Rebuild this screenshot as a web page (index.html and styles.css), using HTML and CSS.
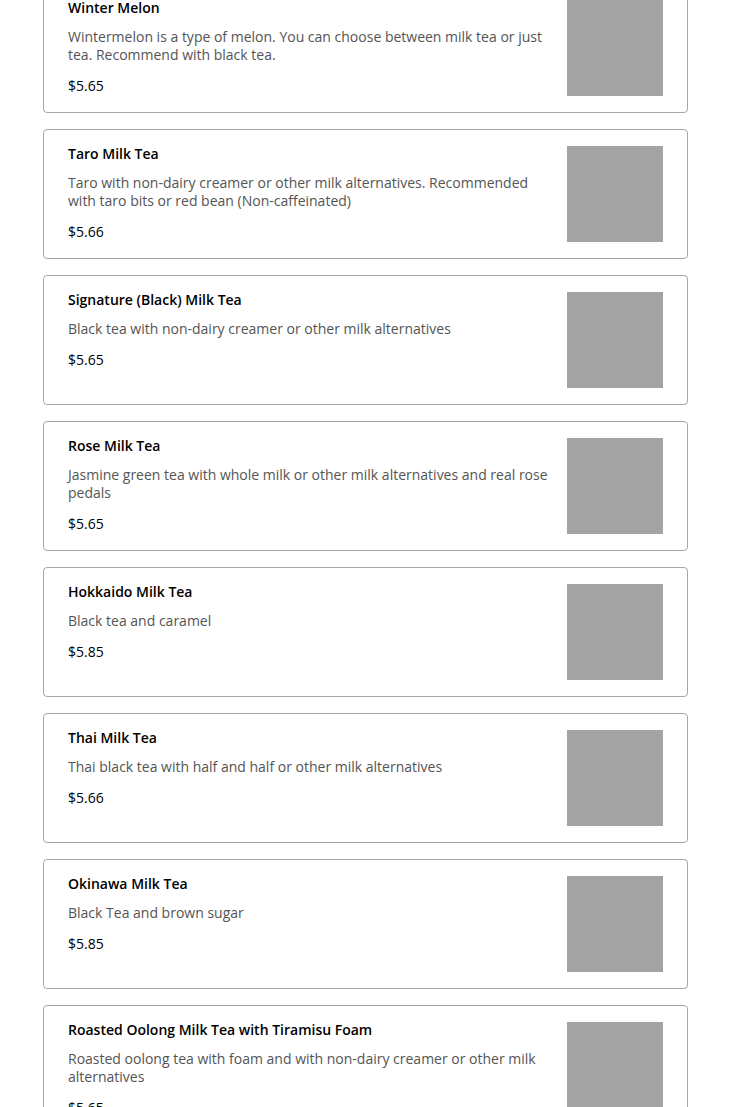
FILE: index.html
```html
<!DOCTYPE html>
<html>
<head>
<meta charset="utf-8">
<link rel="stylesheet" href="styles.css">
</head>
<body>
<div class="menu">
  <div class="item">
    <div class="info">
      <div class="title">Winter Melon</div>
      <div class="desc">Wintermelon is a type of melon. You can choose between milk tea or just tea. Recommend with black tea.</div>
      <div class="price">$5.65</div>
    </div>
    <div class="thumb"></div>
  </div>
  <div class="item">
    <div class="info">
      <div class="title">Taro Milk Tea</div>
      <div class="desc">Taro with non-dairy creamer or other milk alternatives. Recommended with taro bits or red bean (Non-caffeinated)</div>
      <div class="price">$5.66</div>
    </div>
    <div class="thumb"></div>
  </div>
  <div class="item">
    <div class="info">
      <div class="title">Signature (Black) Milk Tea</div>
      <div class="desc">Black tea with non-dairy creamer or other milk alternatives</div>
      <div class="price">$5.65</div>
    </div>
    <div class="thumb"></div>
  </div>
  <div class="item">
    <div class="info">
      <div class="title">Rose Milk Tea</div>
      <div class="desc">Jasmine green tea with whole milk or other milk alternatives and real rose pedals</div>
      <div class="price">$5.65</div>
    </div>
    <div class="thumb"></div>
  </div>
  <div class="item">
    <div class="info">
      <div class="title">Hokkaido Milk Tea</div>
      <div class="desc">Black tea and caramel</div>
      <div class="price">$5.85</div>
    </div>
    <div class="thumb"></div>
  </div>
  <div class="item">
    <div class="info">
      <div class="title">Thai Milk Tea</div>
      <div class="desc">Thai black tea with half and half or other milk alternatives</div>
      <div class="price">$5.66</div>
    </div>
    <div class="thumb"></div>
  </div>
  <div class="item">
    <div class="info">
      <div class="title">Okinawa Milk Tea</div>
      <div class="desc">Black Tea and brown sugar</div>
      <div class="price">$5.85</div>
    </div>
    <div class="thumb"></div>
  </div>
  <div class="item">
    <div class="info">
      <div class="title">Roasted Oolong Milk Tea with Tiramisu Foam</div>
      <div class="desc">Roasted oolong tea with foam and with non-dairy creamer or other milk alternatives</div>
      <div class="price">$5.65</div>
    </div>
    <div class="thumb"></div>
  </div>
</div>
</body>
</html>
```

FILE: styles.css
```css
html, body {
  margin: 0;
  padding: 0;
  background: #ffffff;
  overflow: hidden;
}
body {
  font-family: "Open Sans", "Liberation Sans", sans-serif;
  color: #000000;
}
.menu {
  width: 645px;
  margin: -17px 0 0 43px;
  display: flex;
  flex-direction: column;
  gap: 16px;
}
.item {
  display: flex;
  gap: 16px;
  padding: 16px 24px;
  border: 1px solid #a6a6a6;
  border-radius: 4px;
}
.info {
  flex: 1;
  min-width: 0;
}
.title {
  font-size: 14px;
  line-height: 16px;
  font-weight: 600;
  color: #000000;
}
.desc {
  margin-top: 12px;
  font-size: 14px;
  line-height: 18px;
  color: #545454;
}
.price {
  margin-top: 13px;
  font-size: 14px;
  line-height: 18px;
  color: #000000;
}
.thumb {
  width: 96px;
  height: 96px;
  flex: none;
  background: #a3a3a3;
}
```
